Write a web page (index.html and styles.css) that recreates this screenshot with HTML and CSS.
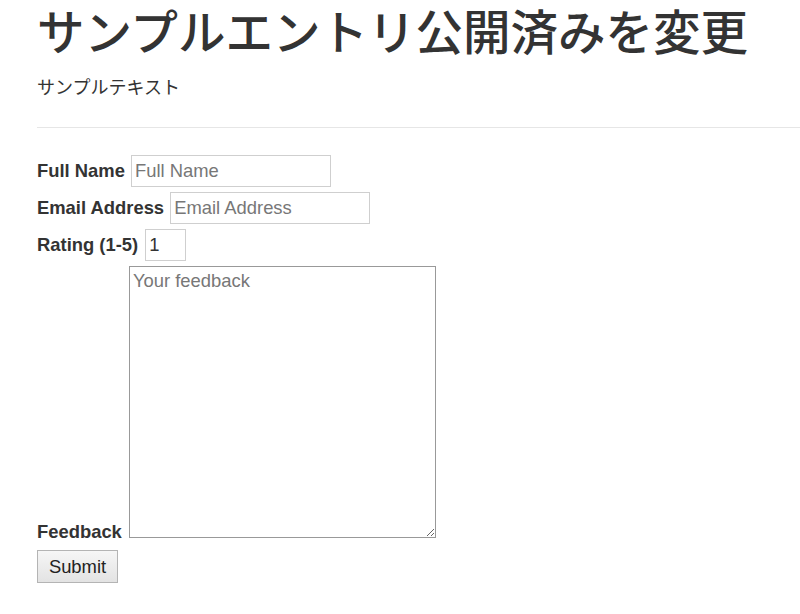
FILE: index.html
```html
<!DOCTYPE html>
<html>
<head>
    <meta charset="utf-8">
    <title>サンプルエントリ公開済みを変更</title>
    <link rel="stylesheet" href="styles.css">
</head>
<body>
    <div class="page">
        <h1 class="title">サンプルエントリ公開済みを変更</h1>
        <p class="lead">サンプルテキスト</p>
        <hr class="rule">

        <form class="feedback-form">
            <div class="row">
                <label for="fullName">Full Name</label>
                <input type="text" id="fullName" class="field" placeholder="Full Name">
            </div>
            <div class="row">
                <label for="email">Email Address</label>
                <input type="text" id="email" class="field" placeholder="Email Address">
            </div>
            <div class="row">
                <label for="rating">Rating (1-5)</label>
                <input type="text" id="rating" class="field field-small" value="1">
            </div>
            <div class="row">
                <label for="feedback">Feedback</label>
                <textarea id="feedback" class="area" placeholder="Your feedback"></textarea>
            </div>
            <button type="button" class="submit">Submit</button>
        </form>
    </div>
</body>
</html>
```

FILE: styles.css
```css
body {
    margin: 0;
    color: #333;
    background: #fff;
    font-family: "Liberation Sans", "Noto Sans CJK JP", sans-serif;
    font-size: 18.4px;
}
.page {
    padding-left: 37px;
}
.title {
    margin: 8px 0 0 0;
    font-size: 47.5px;
    font-weight: 500;
    line-height: 1.1;
}
.lead {
    margin: 16px 0 0 0;
    font-size: 18px;
    line-height: 1.4;
}
.rule {
    margin: 26px 0 27px 0;
    border: 0;
    border-top: 1px solid #e6e6e6;
}
.row {
    margin-bottom: 5px;
}
.row label {
    font-weight: bold;
    margin-right: 1px;
}
.field {
    box-sizing: border-box;
    width: 200px;
    height: 32px;
    padding: 1px 3px;
    border: 1px solid #cfcfcf;
    font-family: inherit;
    font-size: 18.4px;
    color: #333;
}
.field::placeholder, .area::placeholder {
    color: #777;
}
.field-small {
    width: 41px;
    margin-left: 1px;
}
.area {
    box-sizing: border-box;
    width: 307px;
    height: 272px;
    padding: 3px 3px;
    border: 1px solid #999;
    font-family: inherit;
    font-size: 18.4px;
    color: #333;
    vertical-align: baseline;
    margin-left: 1px;
}
.submit {
    box-sizing: border-box;
    width: 81px;
    height: 33px;
    margin-top: 2px;
    border: 1px solid #b4b4b4;
    background: linear-gradient(#f6f6f6, #e3e3e3);
    font-family: inherit;
    font-size: 18.4px;
    color: #222;
}
```
